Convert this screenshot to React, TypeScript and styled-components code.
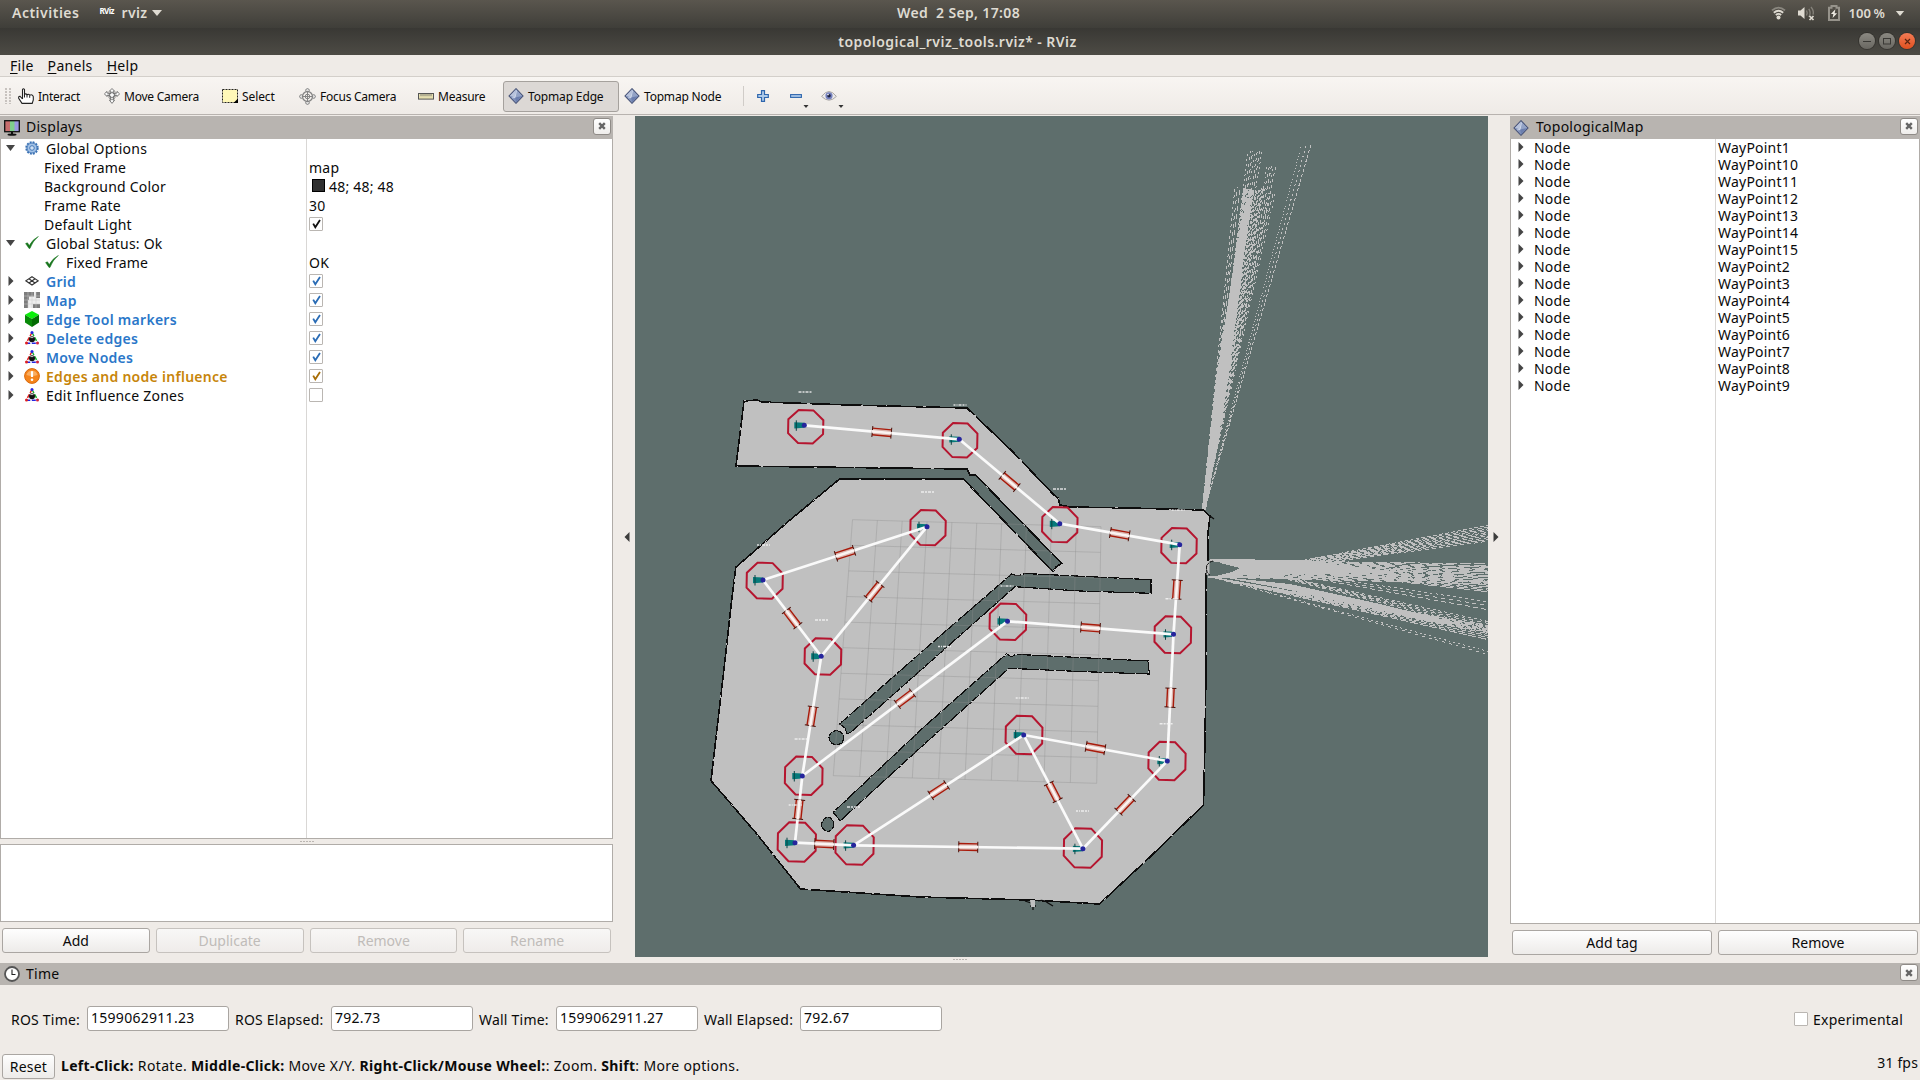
import React from "react";
import styled, { createGlobalStyle, css } from "styled-components";

const Global = createGlobalStyle`
  * { box-sizing: border-box; }
  html, body { margin: 0; padding: 0; background: #efebe7; }
  body { width: 1920px; height: 1080px; overflow: hidden; font-family: "Noto Sans", "Open Sans", sans-serif; font-size: 14px; color: #0a0a0a; }
  svg { display: block; }
`;

const Screen = styled.div`
  width: 1920px; height: 1080px; display: flex; flex-direction: column; background: #efebe7;
`;

/* ---------- desktop bar and window title ---------- */
const TopBar = styled.div`
  height: 28px; flex: none; display: grid; grid-template-columns: 1fr auto 1fr; align-items: center;
  background: linear-gradient(#5a564e, #3f3e39); color: #dfdbd2; font-weight: 600; font-size: 14px;
  line-height: 26px; padding: 0 15px 2px 12px;
`;
const TopLeft = styled.div`display: flex; align-items: center;`;
const TopRight = styled.div`display: flex; align-items: center; justify-content: flex-end; font-size: 13px;`;
const Bar = styled.span<{ $ls?: number; $ml?: number }>`
  white-space: pre; letter-spacing: ${(p) => p.$ls ?? 0}px; margin-left: ${(p) => p.$ml ?? 0}px;
`;
const RvizMark = styled.span`
  margin-left: 20px; width: 16px; font-size: 8px; line-height: 10px; font-weight: 700; color: #fff;
  letter-spacing: -0.6px; margin-top: -4px;
`;
const Slot = styled.span<{ $w: number; $ml?: number }>`
  flex: none; width: ${(p) => p.$w}px; margin-left: ${(p) => p.$ml ?? 0}px; display: flex; justify-content: center;
`;
const TitleBar = styled.div`
  height: 27px; flex: none; display: grid; grid-template-columns: 1fr auto 1fr; align-items: center;
  background: linear-gradient(#393834, #4d4b45); color: #dfdbd2; font-weight: 600; font-size: 14px;
  padding: 0 5px 1px 0; letter-spacing: 0.45px;
`;
const WinButtons = styled.div`display: flex; gap: 4px; justify-content: flex-end;`;
const WinButton = styled.span<{ $close?: boolean }>`
  width: 16px; height: 16px; border-radius: 50%; display: flex; align-items: center; justify-content: center;
  background: ${(p) => (p.$close ? "linear-gradient(#f37b55, #e0501f)" : "linear-gradient(#8b8982, #696761)")};
  box-shadow: 0 0 0 1px rgba(40, 38, 34, 0.5);
`;

/* ---------- menu and tool bars ---------- */
const MenuBar = styled.div`
  height: 22px; flex: none; display: flex; gap: 14px; padding: 0 10px; line-height: 22px;
  border-bottom: 1px solid #d3cfca; letter-spacing: 0.3px;
`;
const Key = styled.span`text-decoration: underline; text-underline-offset: 2px; text-decoration-thickness: 1px;`;
const ToolBar = styled.div`
  height: 39px; flex: none; display: flex; align-items: center; padding: 0 5px;
  background: linear-gradient(#f8f5f2, #efebe7 36px); border-bottom: 1px solid #efebe7;
  box-shadow: inset 0 -1px 0 #b8b3af; font-size: 12px;
`;
const Handle = styled.div`
  width: 8px; height: 16px; flex: none;
  background-image: radial-gradient(circle at 1px 1px, #c6c1bd 0.7px, transparent 1px); background-size: 4px 3px;
`;
const Tool = styled.div<{ $w: number; $on?: boolean }>`
  width: ${(p) => p.$w}px; height: 31px; margin-top: 1px; flex: none; display: flex; align-items: center; gap: 4px;
  padding: 0 0 1px 5px; white-space: pre; border: 0 solid #a5a19d; border-radius: 3px;
  ${(p) => p.$on && css`border-width: 1px; padding: 0 0 1px 4px; background: #dcd8d5;`}
`;
const ToolText = styled.span<{ $ls?: number }>`letter-spacing: ${(p) => p.$ls ?? -0.25}px;`;
const Separator = styled.div`width: 1px; height: 20px; background: #d0ccc8; margin: 0 13px 0 9px;`;
const DropTool = styled.div<{ $w: number }>`
  width: ${(p) => p.$w}px; height: 24px; flex: none; display: flex; align-items: center;
`;
const DropMark = styled.span`align-self: flex-end; margin-left: 1px;`;

/* ---------- docks ---------- */
const Main = styled.div`height: 847px; flex: none; display: flex;`;
const Dock = styled.div<{ $w: number; $pb: number }>`
  width: ${(p) => p.$w}px; padding-bottom: ${(p) => p.$pb}px; flex: none; display: flex; flex-direction: column;
`;
const DockTitle = styled.div<{ $h: number; $pl?: number; $gap?: number }>`
  height: ${(p) => p.$h}px; flex: none; display: flex; align-items: center; gap: ${(p) => p.$gap ?? 6}px;
  padding: 0 2px 0 ${(p) => p.$pl ?? 4}px; background: #b8b4b0;
`;
const DockName = styled.span`flex: 1; letter-spacing: 0.25px; line-height: 20px; padding-bottom: 1px;`;
const CloseBox = styled.span`
  width: 18px; height: 17px; margin-bottom: 3px; border-radius: 3px; border: 1px solid #8f8b87;
  background: linear-gradient(#fff, #efedeb); display: flex; align-items: center; justify-content: center;
`;
const Splitter = styled.div<{ $l?: number; $r?: number }>`
  width: 22px; flex: none; display: flex; align-items: center; justify-content: center;
  padding: 0 ${(p) => p.$r ?? 0}px 6px ${(p) => p.$l ?? 0}px;
`;
const Tree = styled.div<{ $left: number }>`
  flex: 1; display: grid; grid-template-columns: ${(p) => p.$left}px 1fr; background: #fff;
  border: 1px solid #b0aca8; border-top: 0;
`;
const Column = styled.div<{ $line?: boolean }>`
  border-right: ${(p) => (p.$line ? "1px solid #d9d7d5" : "0")}; display: flex; flex-direction: column;
  & > :first-child { margin-top: -1px; }
`;
const Row = styled.div<{ $h: number; $pad?: number }>`
  height: ${(p) => p.$h}px; line-height: ${(p) => p.$h}px; padding-left: ${(p) => p.$pad ?? 0}px;
  display: flex; align-items: center; flex: none; white-space: pre;
`;
const Label = styled.span<{ $c?: string; $b?: boolean }>`
  color: ${(p) => p.$c ?? "#0a0a0a"}; font-weight: ${(p) => (p.$b ? 600 : 400)}; padding-top: 1px;
  letter-spacing: ${(p) => (p.$b ? 0.28 : 0.22)}px;
`;
const Check = styled.span<{ $s: number }>`
  width: ${(p) => p.$s}px; height: ${(p) => p.$s}px; flex: none; border: 1px solid #bab6b2; background: #fff;
  border-radius: 1px; display: flex; align-items: center; justify-content: center;
`;
const Swatch = styled.span`width: 13px; height: 13px; margin: 0 4px 0 3px; background: #303030; border: 1px solid #000;`;
const Dots = styled.div<{ $shift?: number }>`
  height: 5px; flex: none; display: flex; gap: 1px; justify-content: center; padding: 2px ${(p) => p.$shift ?? 0}px 0 0;
  & > i { width: 2px; height: 1px; background: #bbb6b2; }
`;
const HelpBox = styled.div`height: 78px; flex: none; background: #fff; border: 1px solid #b0aca8;`;
const ButtonRow = styled.div<{ $top: number }>`
  height: 25px; flex: none; display: flex; gap: 6px; padding: 0 2px; margin: ${(p) => p.$top}px 0 0;
`;
const Push = styled.div<{ $off?: boolean }>`
  flex: 1; height: 25px; display: flex; align-items: center; justify-content: center; border-radius: 3px;
  border: 1px solid ${(p) => (p.$off ? "#c6c2be" : "#aaa6a2")}; color: ${(p) => (p.$off ? "#c0bcb9" : "#0a0a0a")};
  background: ${(p) => (p.$off ? "linear-gradient(#f8f7f6, #efecea)" : "linear-gradient(#fefefe, #edebe9)")};
`;
const Center = styled.div`width: 853px; flex: none; display: flex; flex-direction: column;`;
const Viewport = styled.div`height: 841px; flex: none; background: #5e6e6c; overflow: hidden;`;

/* ---------- time panel and status ---------- */
const TimePanel = styled.div`height: 65px; flex: none; display: flex; align-items: center; padding: 0 17px 0 11px; margin-top: 1px;`;
const TimeLabel = styled.span<{ $w: number }>`width: ${(p) => p.$w}px; flex: none; white-space: pre; letter-spacing: 0.22px; padding-top: 1px;`;
const Field = styled.div<{ $mr: number }>`
  width: 142px; height: 25px; margin-right: ${(p) => p.$mr}px; flex: none; background: #fff;
  border: 1px solid #a9a5a1; border-radius: 3px; line-height: 22px; padding-left: 3px; letter-spacing: 0.28px;
`;
const Spacer = styled.div`flex: 1;`;
const StatusBar = styled.div`height: 29px; flex: none; display: flex; align-items: center; padding: 0 2px;`;
const ResetButton = styled(Push)`flex: none; width: 53px; margin-top: 1px; letter-spacing: 0.2px;`;
const Hint = styled.div`margin-left: 6px; white-space: pre; letter-spacing: 0.35px; & b { font-weight: 700; letter-spacing: 0.32px; }`;
const Fps = styled.div`margin: -6px 0 0 0; letter-spacing: 0.15px;`;

/* ---------- icons ---------- */
const CaretDown = ({ w = 10, h = 6, c = "#dfdbd2" }) => (
  <svg width={w} height={h} viewBox="0 0 10 6"><path d="M0 0H10L5 6Z" fill={c} /></svg>
);
const ArrowOpen = () => <svg width="9" height="6" viewBox="0 0 9 6"><path d="M0 0H9L4.5 6Z" fill="#454545" /></svg>;
const ArrowShut = () => <svg width="6" height="10" viewBox="0 0 6 10"><path d="M0.5 0L5.5 5L0.5 10Z" fill="#454545" /></svg>;
const SideArrow = ({ left }: { left?: boolean }) => (
  <svg width="6" height="10" viewBox="0 0 6 10"><path d={left ? "M5.5 0L0.5 5L5.5 10Z" : "M0.5 0L5.5 5L0.5 10Z"} fill="#3c3c3c" /></svg>
);
const CrossMark = () => (
  <svg width="8" height="8" viewBox="0 0 8 8"><path d="M1.2 1.2L6.8 6.8M6.8 1.2L1.2 6.8" stroke="#666" strokeWidth="2.4" /></svg>
);
const Tick = ({ c }: { c: string }) => (
  <svg width="9" height="10" viewBox="0 0 9 10"><path d="M1.2 4.6L3.3 8.3L8 1" fill="none" stroke={c} strokeWidth="1.8" /></svg>
);
const WifiIcon = () => (
  <svg width="15" height="14" viewBox="0 0 15 14" fill="none" strokeWidth="1.8">
    <path d="M1 4.4Q7.5 -1.2 14 4.4" stroke="#8a877f" />
    <path d="M2.8 6.8Q7.5 2.8 12.2 6.8" stroke="#dfdbd2" />
    <path d="M4.8 9Q7.5 6.8 10.2 9" stroke="#dfdbd2" />
    <circle cx="7.5" cy="11.6" r="2" fill="#dfdbd2" />
  </svg>
);
const SpeakerIcon = () => (
  <svg width="17" height="15" viewBox="0 0 17 15" fill="none">
    <path d="M0 4.5H2.5L6.5 1V13L2.5 9.5H0Z" fill="#dfdbd2" />
    <path d="M8.5 4.5Q10 7 8.5 9.5M10.8 2.8Q13.4 7 10.8 11M13 1Q16.2 5 15 8.6" stroke="#85827a" strokeWidth="1.3" />
    <path d="M11.5 10L15.5 14M15.5 10L11.5 14" stroke="#dfdbd2" strokeWidth="1.7" />
  </svg>
);
const BatteryIcon = () => (
  <svg width="12" height="16" viewBox="0 0 12 16">
    <path d="M3.5 1H8.5V2.8H11V15H1V2.8H3.5Z" fill="none" stroke="#96938b" strokeWidth="2" />
    <path d="M7.4 4.2L2.9 9H5.4L4.6 13L9.1 8.2H6.6Z" fill="#efece4" />
  </svg>
);
const HandIcon = () => (
  <svg width="16" height="16" viewBox="0 0 16 16">
    <path d="M4.5 11V1.6Q5.4 0 6.5 1.6V6.5Q7.6 5.2 9 6.7Q10.4 5.6 11.7 7.2Q14.4 6 15.3 8.6V12L14.2 15.4H4L0.7 10.4Q0.4 8 2.2 8.4L4.5 11" fill="#fff" stroke="#222" strokeWidth="1.1" />
    <path d="M6.5 6.5V9.5M9 7V9.5M11.7 7.5V9.8" stroke="#222" strokeWidth="1" />
  </svg>
);
const MoveIcon = () => (
  <svg width="16" height="16" viewBox="0 0 16 16" fill="none" stroke="#6e6e6e" strokeWidth="0.9">
    <path d="M8 0.5L10.6 3.2H9.2V5.6L13 5V3.4L15.6 5.8L13 8.6V7.2L9.8 8L9.2 12.2H10.6L8 15.4L5.4 12.2H6.8L6.2 8L3 7.2V8.6L0.4 5.8L3 3.4V5L6.8 5.6V3.2H5.4Z" fill="#f8f8f8" />
    <circle cx="8" cy="7" r="2.5" /><path d="M5 10.5Q8 12.5 11 10.5M5 3.5V10M11 3.5V10" strokeWidth="0.7" />
  </svg>
);
const SelectIcon = () => (
  <svg width="16" height="14" viewBox="0 0 16 14">
    <rect x="0.5" y="0.5" width="15" height="13" fill="#fff8b8" stroke="#222" strokeDasharray="2 1" />
    <path d="M16 9.5V14H11.5Z" fill="#000" />
  </svg>
);
const FocusIcon = () => (
  <svg width="17" height="17" viewBox="0 0 17 17" fill="none" stroke="#858585">
    <circle cx="8.5" cy="8.5" r="5" strokeWidth="1.3" /><circle cx="8.5" cy="8.5" r="2.3" />
    <path d="M8.5 3V14M3 8.5H14" strokeWidth="1" />
    <path d="M6.7 2.8V1.6Q8.5 -0.6 10.3 1.6V2.8M6.7 14.2V15.4Q8.5 17.6 10.3 15.4V14.2M2.8 6.7H1.6Q-0.6 8.5 1.6 10.3H2.8M14.2 6.7H15.4Q17.6 8.5 15.4 10.3H14.2" fill="#ddd" />
  </svg>
);
const RulerIcon = () => (
  <svg width="16" height="7" viewBox="0 0 16 7">
    <rect x="0.5" y="0.5" width="15" height="5.6" fill="#e6dfb0" stroke="#555" />
    <path d="M3 1V3.2M5 1V3.2M7 1V3.2M9 1V3.2M11 1V3.2M13 1V3.2" stroke="#666" strokeWidth="0.8" />
  </svg>
);
const DiamondIcon = () => (
  <svg width="16" height="16" viewBox="0 0 16 16">
    <path d="M8 0.7L15 8L8 15.3L1 8Z" fill="#8ea0cc" stroke="#4a5578" strokeWidth="1.1" />
    <path d="M8 1.6L1.8 8L7 9.6Z" fill="#b9c4dc" /><path d="M8 1.6L14.2 8L7 9.6Z" fill="#93a3c6" />
    <path d="M1.8 8L7 9.6L8 14.4Z" fill="#7f90b8" /><path d="M14.2 8L7 9.6L8 14.4Z" fill="#6c7fae" />
    <path d="M8.5 2.5L7 9.6L4.2 9.8" fill="none" stroke="#dde4f2" strokeWidth="0.8" />
  </svg>
);
const PlusIcon = () => (
  <svg width="12" height="12" viewBox="0 0 12 12">
    <path d="M4.5 0.7H7.5V4.5H11.3V7.5H7.5V11.3H4.5V7.5H0.7V4.5H4.5Z" fill="#aecbea" stroke="#2f66ad" strokeWidth="1.2" />
  </svg>
);
const MinusIcon = () => (
  <svg width="12" height="4" viewBox="0 0 12 4"><rect x="0.6" y="0.6" width="10.8" height="2.8" fill="#aecbea" stroke="#2f66ad" strokeWidth="1.1" /></svg>
);
const EyeIcon = () => (
  <svg width="16" height="12" viewBox="0 0 16 12">
    <path d="M0.6 6.4Q8 -3.4 15.4 6.4Q8 14 0.6 6.4Z" fill="#eceaea" stroke="#aaa7a5" />
    <circle cx="8" cy="5.8" r="3.6" fill="#7480bd" /><circle cx="8" cy="5.8" r="1.8" fill="#1c2040" /><circle cx="7" cy="4.6" r="0.8" fill="#fff" />
  </svg>
);
const MonitorIcon = () => (
  <svg width="16" height="16" viewBox="0 0 16 16">
    <rect x="0.7" y="0.7" width="14.6" height="11" fill="#7fcf8b" /><rect x="1" y="1" width="5" height="10.4" fill="#c86e6e" />
    <rect x="10.5" y="1" width="4.5" height="10.4" fill="#9a98e0" />
    <rect x="0.7" y="0.7" width="14.6" height="11" fill="none" stroke="#111" strokeWidth="1.3" />
    <path d="M7 12H9V14H7Z" fill="#111" /><ellipse cx="8" cy="14.7" rx="4.5" ry="1.1" fill="#111" />
  </svg>
);
const GearIcon = () => (
  <svg width="14" height="14" viewBox="0 0 14 14">
    <circle cx="7" cy="7" r="5.7" fill="none" stroke="#3b72b4" strokeWidth="2" strokeDasharray="1.9 1.08" />
    <circle cx="7" cy="7" r="5" fill="#a3c2e6" stroke="#3b72b4" strokeWidth="0.9" />
    <circle cx="7" cy="7" r="2.3" fill="#cfe0f3" stroke="#3b72b4" strokeWidth="0.9" />
  </svg>
);
const GreenCheck = () => (
  <svg width="14" height="13" viewBox="0 0 14 13">
    <path d="M0.6 7.6L2.4 6.8L4.4 9.4Q7.4 3.4 13.4 0.4Q7.6 5.2 5 12.4H4Z" fill="#17751c" stroke="#17751c" strokeWidth="0.5" />
  </svg>
);
const GridIcon = () => (
  <svg width="14" height="10" viewBox="0 0 14 10" fill="none" stroke="#333" strokeWidth="1.1">
    <path d="M7 0.7L13.2 4.8L7 9L0.8 4.8ZM3.9 2.8L10 7M10.1 2.8L4 7" />
  </svg>
);
const MapIcon = () => (
  <svg width="16" height="16" viewBox="0 0 16 16">
    <rect width="16" height="16" fill="#eee" />
    <path d="M0 0H10V4.5H5V8H4V16H0ZM12 0H16V6H12ZM9 12H16V16H9Z" fill="#7d7d7d" />
    <path d="M4 0V16M8 0V16M12 0V16M0 4H16M0 8H16M0 12H16" stroke="#c8c8c8" strokeWidth="0.5" />
  </svg>
);
const CubeIcon = () => (
  <svg width="14" height="16" viewBox="0 0 14 16">
    <path d="M7 0L14 3.8L7 8L0 3.8Z" fill="#0bf00b" /><path d="M0 3.8L7 8V16L0 11.6Z" fill="#088a08" /><path d="M14 3.8L7 8V16L14 11.6Z" fill="#046c04" />
  </svg>
);
const MarkerIcon = () => (
  <svg width="14" height="14" viewBox="0 0 14 14" fill="none">
    <path d="M7 1.5L1.3 12" stroke="#e02020" strokeWidth="1.5" strokeDasharray="4 1.5" />
    <path d="M7 1.5L12.7 12" stroke="#18b030" strokeWidth="1.5" strokeDasharray="4 1.5" />
    <path d="M1.3 12.2H12.7" stroke="#2525e0" strokeWidth="1.5" strokeDasharray="4 1.5" />
    <circle cx="7" cy="1.6" r="1.5" fill="#2525e0" /><circle cx="1.5" cy="12" r="1.5" fill="#e02020" /><circle cx="12.5" cy="12" r="1.5" fill="#d02040" />
    <circle cx="7" cy="8.3" r="3" fill="#111" /><path d="M5.4 6.6H8.4" stroke="#ccc" strokeWidth="1" />
  </svg>
);
const WarnIcon = () => (
  <svg width="16" height="16" viewBox="0 0 16 16">
    <circle cx="8" cy="8" r="7.4" fill="#f5841c" stroke="#d8690c" /><path d="M2.4 7A5.8 5.8 0 0 1 13.6 7Q8 9 2.4 7Z" fill="#f9ad62" />
    <path d="M8 3.2V9" stroke="#fff" strokeWidth="2.2" /><circle cx="8" cy="11.8" r="1.3" fill="#fff" />
  </svg>
);
const ClockIcon = () => (
  <svg width="16" height="16" viewBox="0 0 16 16">
    <circle cx="8" cy="8" r="7" fill="#fff" stroke="#555" strokeWidth="1.8" /><path d="M8 3.5V8.5H11.5" fill="none" stroke="#222" strokeWidth="1.1" />
  </svg>
);

/* ---------- map scene ---------- */
type P = [number, number];
const FREE =
  "744,401 757,400 762,402 850,405 967,408 1012,451 1054,495 1058,498 1060,505 1070,507 1130,508 1203,510 1210,516 1208,533 1208,560 1206,575 1206,670 1205,740 1203.5,805 1150,857 1099.5,904 1030,900 920,897 800.5,889 756,833 711,780.7 725,660 731,606 735.8,567.3 790,520 839.5,479 963.4,479 1053,571.7 1056,567 1061.6,563.3 975.5,475 970,475 967,469 850,467.5 736,466";
const WALLS = [
  "1011.6,574 1017,576 1025,573.5 1151,579.7 1151,593.3 1080,591 1015,586.7 930,662 851,732 847,734 845,728 839.5,724 925,649",
  "1006.5,654 1012,657 1015,654.3 1148.7,661 1149,674 1080,671.5 1008.9,668.3 920,748 840,821 833.3,812.3 925,726",
];
const NODES: Record<string, { o: P; d: P; r: P }> = {
  A: { o: [805.7, 426.7], d: [804.3, 425.3], r: [17.5, 16.5] },
  B: { o: [960, 440.3], d: [959.3, 439.3], r: [17.3, 17] },
  C: { o: [1059.8, 524.7], d: [1059.8, 523.7], r: [17.6, 17.4] },
  D: { o: [1179, 545.7], d: [1179.7, 544.7], r: [17.6, 17.4] },
  E: { o: [928, 527.7], d: [927, 526.7], r: [17.6, 17.4] },
  F: { o: [764.7, 580.7], d: [763, 580], r: [18, 17.8] },
  G: { o: [822.9, 656.5], d: [821.2, 656.3], r: [18.2, 18] },
  H: { o: [1007.9, 621.7], d: [1007.5, 621.3], r: [18.2, 18] },
  I: { o: [1172.8, 634.7], d: [1173.5, 634.3], r: [18.2, 18.2] },
  J: { o: [803.7, 775.7], d: [802.3, 776], r: [18.7, 19] },
  K: { o: [796.8, 842], d: [795, 842.7], r: [19, 19.4] },
  L: { o: [854.6, 845], d: [853.6, 845.3], r: [19, 19.6] },
  M: { o: [1082.9, 848], d: [1082.9, 848.7], r: [19, 19.6] },
  N: { o: [1167, 761], d: [1167.3, 761], r: [18.5, 19] },
  O: { o: [1024, 735], d: [1023.7, 735], r: [18.3, 19] },
};
const EDGES = ["AB", "BC", "CD", "DI", "IN", "EF", "EG", "FG", "GJ", "JK", "HI", "HJ", "KL", "LO", "ON", "OM", "LM", "MN"];
const TAGS: P[] = [
  [805.5, 392], [960.5, 405], [1060, 489], [1178.7, 510], [928, 492], [764, 545], [822, 620], [1007.5, 586],
  [1172.5, 598.7], [945, 646.5], [801.6, 739], [795.7, 805], [854, 807], [1083, 811], [1166.6, 723.7], [1022.7, 698],
];
const octagon = ([cx, cy]: P, [rx, ry]: P) => {
  const k = 0.42;
  const raw: P[] = [[-k, -1], [k, -1], [1, -k], [1, k], [k, 1], [-k, 1], [-1, k], [-1, -k]];
  return raw.map(([x, y]) => `${cx + (x + y * -0.02) * rx},${cy + (y + x * 0.03) * ry}`).join(" ");
};
const lerp = (a: P, b: P, t: number): P => [a[0] + (b[0] - a[0]) * t, a[1] + (b[1] - a[1]) * t];
const GRID: [P, P, P, P] = [[852.5, 519.7], [1101, 526.7], [1096.7, 783.3], [833.3, 775.7]];

type Ray = { from: P; to: P; dash: string; off: number };
const fan = (from: P, a: P, b: P, n: number, dash: [number, number]): Ray[] =>
  Array.from({ length: n }, (_, i) => ({
    from, to: lerp(a, b, n === 1 ? 0 : i / (n - 1)), dash: `${dash[0] + (i % 3)} ${dash[1] + ((i * 7) % 2)}`, off: (i * 13) % 7,
  }));
const RAYS: Ray[] = [
  ...fan([1202.5, 508], [1235, 187], [1240, 187], 3, [3, 3]),
  ...fan([1203, 508], [1244, 188], [1254, 190], 13, [6, 1]),
  ...fan([1203, 508], [1248, 151], [1262, 151], 7, [2, 3]),
  ...fan([1204, 508], [1256, 190], [1264, 187], 7, [2, 2]),
  ...fan([1204, 508], [1267, 167], [1276, 165], 5, [2, 3]),
  ...fan([1204, 508], [1268, 195], [1276, 190], 4, [2, 3]),
  ...fan([1205, 508], [1301, 147], [1310.7, 145.5], 3, [1, 2]),
  ...fan([1215, 577], [1490, 525], [1490, 541], 10, [4, 2]),
  ...fan([1208, 560], [1490, 564], [1490, 592], 18, [11, 3]),
  ...fan([1208, 577], [1490, 566], [1490, 584], 11, [9, 4]),
  ...fan([1210, 560], [1490, 602], [1490, 610], 3, [3, 3]),
  ...fan([1210, 560], [1490, 622], [1490, 630], 5, [3, 3]),
  ...fan([1210, 577], [1490, 626], [1490, 634], 8, [7, 2]),
  ...fan([1210, 577], [1490, 636], [1490, 640], 3, [6, 2]),
  ...fan([1212, 577], [1490, 652], [1490, 655], 2, [2, 3]),
];

const Marker = ({ a, b }: { a: P; b: P }) => {
  const [mx, my] = lerp(a, b, 0.5);
  const ang = (Math.atan2(b[1] - a[1], b[0] - a[0]) * 180) / Math.PI;
  return (
    <g transform={`translate(${mx} ${my}) rotate(${ang})`}>
      <rect x="-9.5" y="-3.5" width="19" height="7" fill="#d9b4ae" />
      <path d="M-9.5 -3.3H9.5M-9.5 3.3H9.5" stroke="#a81a0a" strokeWidth="1.4" />
      <path d="M-9.5 -5.5V5.5M9.5 -5.5V5.5" stroke="#4a0f08" strokeWidth="1" />
      <path d="M-10 0H10" stroke="#fbf3f1" strokeWidth="2.6" />
    </g>
  );
};

const Scene = () => (
  <svg width="853" height="841" viewBox="635 116 853 841">
    <g stroke="#c0c0c0" strokeWidth="1" shapeRendering="crispEdges">
      {RAYS.map((r, i) => (
        <line key={i} x1={r.from[0]} y1={r.from[1]} x2={r.to[0]} y2={r.to[1]} strokeDasharray={r.dash} strokeDashoffset={r.off} />
      ))}
    </g>
    <g fill="#c0c0c0" shapeRendering="crispEdges">
      <path d="M1202 510L1216 380L1233 270L1246 200L1250 200L1240 290L1225 400L1206 510Z" />
      <path d="M1208 559L1300 560L1340 565L1400 572L1330 574L1250 575L1208 578L1232 572L1240 568L1222 563Z" />
      <path d="M1222 577L1290 584L1380 604L1470 626L1430 622L1370 608L1290 590Z" />
    </g>
    <polygon points={FREE} fill="#c0c0c0" stroke="#0d0d0d" strokeWidth="1.6" shapeRendering="crispEdges" />
    <polygon points={FREE} fill="none" stroke="#c0c0c0" strokeWidth="1" strokeDasharray="2 23 1 37 3 51" shapeRendering="crispEdges" />
    <path d="M1033 900V910M1030 906H1036M1025 901L1031 903M1038 901Q1044 899 1048 903L1053 906M1210 516L1214 519" stroke="#0d0d0d" strokeWidth="1.3" fill="none" />
    <path d="M1030 900H1035V907H1031Z" fill="#c0c0c0" />
    <path d="M1208 561V575" stroke="#c0c0c0" strokeWidth="3" />
    <path d="M1213 561Q1206 563 1206.500 569Q1207 574 1210 575" stroke="#0d0d0d" strokeWidth="1" fill="none" strokeDasharray="3 1" />
    <g stroke="#0d0d0d" fill="#5e6e6c" shapeRendering="crispEdges">
      {WALLS.map((w) => <polygon key={w} points={w} strokeWidth="1.2" />)}
      <ellipse cx="836.4" cy="737.7" rx="7.400" ry="7" strokeWidth="1.2" strokeDasharray="5 1" />
      <ellipse cx="827.8" cy="824.3" rx="6" ry="7" strokeWidth="1.200" strokeDasharray="5 1" />
    </g>
    {WALLS.map((w) => (
      <polygon key={w} points={w} fill="none" stroke="#c8c8c8" strokeWidth="1" strokeDasharray="1 9 2 14 1 21" shapeRendering="crispEdges" />
    ))}
    <g stroke="#8c8c8c" strokeOpacity="0.36" strokeWidth="1">
      {Array.from({ length: 11 }, (_, i) => {
        const t = i / 10;
        const [a, b] = [lerp(GRID[0], GRID[1], t), lerp(GRID[3], GRID[2], t)];
        const [c, d] = [lerp(GRID[0], GRID[3], t), lerp(GRID[1], GRID[2], t)];
        return <path key={i} d={`M${a}L${b}M${c}L${d}`} />;
      })}
    </g>
    {Object.values(NODES).map(({ o, d, r }, i) => (
      <g key={i}>
        <polygon points={octagon(o, r)} fill="none" stroke="#b5152f" strokeWidth="2" />
        <path d={`M${d[0] - 10} ${d[1] - 3}L${d[0]} ${d[1] - 2.5}V${d[1] + 2.500}L${d[0] - 10} ${d[1] + 3.200}Z`} fill="#067a7a" />
        <path d={`M${d[0] - 8} ${d[1] - 5}V${d[1] + 5.5}`} stroke="#0b4444" strokeWidth="1" />
      </g>
    ))}
    <g stroke="#fafafa" strokeWidth="2.7">
      {EDGES.map((e) => {
        const [a, b] = [NODES[e[0]].d, NODES[e[1]].d];
        return <line key={e} x1={a[0]} y1={a[1]} x2={b[0]} y2={b[1]} />;
      })}
    </g>
    {EDGES.map((e) => <Marker key={e} a={NODES[e[0]].d} b={NODES[e[1]].d} />)}
    {Object.values(NODES).map(({ d }, i) => <circle key={i} cx={d[0]} cy={d[1]} r="2.5" fill="#25259c" />)}
    <g stroke="#f4f4f4" strokeOpacity="0.85" fill="none">
      {TAGS.map(([x, y], i) => (
        <path key={i} d={`M${x - 7} ${y}H${x + 7}`} strokeWidth="1.6" strokeDasharray={i % 2 ? "2 1 1 1 3 1" : "3 1 2 1"} />
      ))}
    </g>
  </svg>
);

/* ---------- data ---------- */
type Item = {
  name: string; arrow?: "open" | "shut"; icon?: React.ReactNode; pad?: number; color?: string; bold?: boolean;
  value?: string; check?: string; swatch?: boolean;
};
const BLUE = "#2a77c9";
const ITEMS: Item[] = [
  { name: "Global Options", arrow: "open", icon: <GearIcon /> },
  { name: "Fixed Frame", pad: 43, value: "map" },
  { name: "Background Color", pad: 43, value: "48; 48; 48", swatch: true },
  { name: "Frame Rate", pad: 43, value: "30" },
  { name: "Default Light", pad: 43, check: "#111" },
  { name: "Global Status: Ok", arrow: "open", icon: <GreenCheck /> },
  { name: "Fixed Frame", pad: 39, icon: <GreenCheck />, value: "OK" },
  { name: "Grid", arrow: "shut", icon: <GridIcon />, color: BLUE, bold: true, check: "#2a6cb5" },
  { name: "Map", arrow: "shut", icon: <MapIcon />, color: BLUE, bold: true, check: "#2a6cb5" },
  { name: "Edge Tool markers", arrow: "shut", icon: <CubeIcon />, color: BLUE, bold: true, check: "#2a6cb5" },
  { name: "Delete edges", arrow: "shut", icon: <MarkerIcon />, color: BLUE, bold: true, check: "#2a6cb5" },
  { name: "Move Nodes", arrow: "shut", icon: <MarkerIcon />, color: BLUE, bold: true, check: "#2a6cb5" },
  { name: "Edges and node influence", arrow: "shut", icon: <WarnIcon />, color: "#c78509", bold: true, check: "#a86e08" },
  { name: "Edit Influence Zones", arrow: "shut", icon: <MarkerIcon />, check: "none" },
];
const WAYPOINTS = ["1", "10", "11", "12", "13", "14", "15", "2", "3", "4", "5", "6", "7", "8", "9"];
const Grip = ({ shift }: { shift?: number }) => <Dots $shift={shift}>{[0, 1, 2, 3, 4].map((i) => <i key={i} />)}</Dots>;

export default function App() {
  return (
    <Screen>
      <Global />
      <TopBar>
        <TopLeft>
          <Bar $ls={0.5}>Activities</Bar>
          <RvizMark>RViz</RvizMark>
          <Bar $ml={6} $ls={0.4}>rviz</Bar>
          <Slot $w={10} $ml={4}><CaretDown /></Slot>
        </TopLeft>
        <Bar $ls={0.35}>Wed  2 Sep, 17:08</Bar>
        <TopRight>
          <WifiIcon />
          <Slot $w={17} $ml={12}><SpeakerIcon /></Slot>
          <Slot $w={12} $ml={13}><BatteryIcon /></Slot>
          <Bar $ml={8} $ls={0.15}>{"100\u2009%"}</Bar>
          <Slot $w={10} $ml={10}><CaretDown h={5} /></Slot>
        </TopRight>
      </TopBar>
      <TitleBar>
        <span />
        <span>topological_rviz_tools.rviz* - RViz</span>
        <WinButtons>
          <WinButton><svg width="8" height="8"><path d="M0 4.500H8" stroke="#3a3935" /></svg></WinButton>
          <WinButton><svg width="8" height="7"><rect x="0.5" y="0.5" width="7" height="5.500" fill="none" stroke="#3a3935" /></svg></WinButton>
          <WinButton $close><svg width="7" height="7"><path d="M1 1L6 6M6 1L1 6" stroke="#5a2410" strokeWidth="1.200" /></svg></WinButton>
        </WinButtons>
      </TitleBar>
      <MenuBar>
        <span><Key>F</Key>ile</span>
        <span><Key>P</Key>anels</span>
        <span><Key>H</Key>elp</span>
      </MenuBar>
      <ToolBar>
        <Handle />
        <Tool $w={86}><HandIcon /><ToolText>Interact</ToolText></Tool>
        <Tool $w={118}><MoveIcon /><ToolText>Move Camera</ToolText></Tool>
        <Tool $w={77}><SelectIcon /><ToolText $ls={-0.1}>Select</ToolText></Tool>
        <Tool $w={119}><FocusIcon /><ToolText>Focus Camera</ToolText></Tool>
        <Tool $w={90}><RulerIcon /><ToolText>Measure</ToolText></Tool>
        <Tool $w={116} $on><DiamondIcon /><ToolText $ls={-0.15}>Topmap Edge</ToolText></Tool>
        <Tool $w={115}><DiamondIcon /><ToolText $ls={-0.2}>Topmap Node</ToolText></Tool>
        <Separator />
        <DropTool $w={33}><PlusIcon /></DropTool>
        <DropTool $w={31}><MinusIcon /><DropMark><CaretDown w={6} h={3} c="#333" /></DropMark></DropTool>
        <DropTool $w={30}><EyeIcon /><DropMark><CaretDown w={6} h={3} c="#333" /></DropMark></DropTool>
      </ToolBar>

      <Main>
        <Dock $w={613} $pb={10}>
          <DockTitle $h={23}>
            <MonitorIcon /><DockName>Displays</DockName><CloseBox><CrossMark /></CloseBox>
          </DockTitle>
          <Tree $left={306}>
            <Column $line>
              {ITEMS.map((it, i) => (
                <Row key={i} $h={19} $pad={it.pad}>
                  {it.arrow && <Slot $w={19}>{it.arrow === "open" ? <ArrowOpen /> : <ArrowShut />}</Slot>}
                  {it.icon && <Slot $w={20} $ml={2}>{it.icon}</Slot>}
                  <Slot $w={it.icon ? 4 : 0} />
                  <Label $c={it.color} $b={it.bold}>{it.name}</Label>
                </Row>
              ))}
            </Column>
            <Column>
              {ITEMS.map((it, i) => (
                <Row key={i} $h={19} $pad={2}>
                  {it.swatch && <Swatch />}
                  {it.value && <Label>{it.value}</Label>}
                  {it.check && <Check $s={14}>{it.check !== "none" && <Tick c={it.check} />}</Check>}
                </Row>
              ))}
            </Column>
          </Tree>
          <Grip />
          <HelpBox />
          <ButtonRow $top={6}>
            <Push>Add</Push>
            <Push $off>Duplicate</Push>
            <Push $off>Remove</Push>
            <Push $off>Rename</Push>
          </ButtonRow>
        </Dock>
        <Splitter $l={5}><SideArrow left /></Splitter>
        <Center>
          <Viewport><Scene /></Viewport>
          <Grip shift={203} />
        </Center>
        <Splitter $r={7}><SideArrow /></Splitter>
        <Dock $w={410} $pb={8}>
          <DockTitle $h={23} $pl={3} $gap={7}>
            <DiamondIcon /><DockName>TopologicalMap</DockName><CloseBox><CrossMark /></CloseBox>
          </DockTitle>
          <Tree $left={205}>
            <Column $line>
              {WAYPOINTS.map((n) => (
                <Row key={n} $h={17}><Slot $w={19}><ArrowShut /></Slot><Slot $w={4} /><Label>Node</Label></Row>
              ))}
            </Column>
            <Column>
              {WAYPOINTS.map((n) => <Row key={n} $h={17} $pad={2}><Label>{"WayPoint" + n}</Label></Row>)}
            </Column>
          </Tree>
          <ButtonRow $top={6}>
            <Push>Add tag</Push>
            <Push>Remove</Push>
          </ButtonRow>
        </Dock>
      </Main>

      <DockTitle $h={22}>
        <ClockIcon /><DockName>Time</DockName><CloseBox><CrossMark /></CloseBox>
      </DockTitle>
      <TimePanel>
        <TimeLabel $w={76}>ROS Time:</TimeLabel><Field $mr={6}>1599062911.23</Field>
        <TimeLabel $w={96}>ROS Elapsed:</TimeLabel><Field $mr={6}>792.73</Field>
        <TimeLabel $w={77}>Wall Time:</TimeLabel><Field $mr={6}>1599062911.27</Field>
        <TimeLabel $w={96}>Wall Elapsed:</TimeLabel><Field $mr={6}>792.67</Field>
        <Spacer />
        <Check $s={14} />
        <Slot $w={5} />
        <Label>Experimental</Label>
      </TimePanel>
      <StatusBar>
        <ResetButton>Reset</ResetButton>
        <Hint><b>Left-Click:</b> Rotate. <b>Middle-Click:</b> Move X/Y. <b>Right-Click/Mouse Wheel:</b>: Zoom. <b>Shift</b>: More options.</Hint>
        <Spacer />
        <Fps>31 fps</Fps>
      </StatusBar>
    </Screen>
  );
}
